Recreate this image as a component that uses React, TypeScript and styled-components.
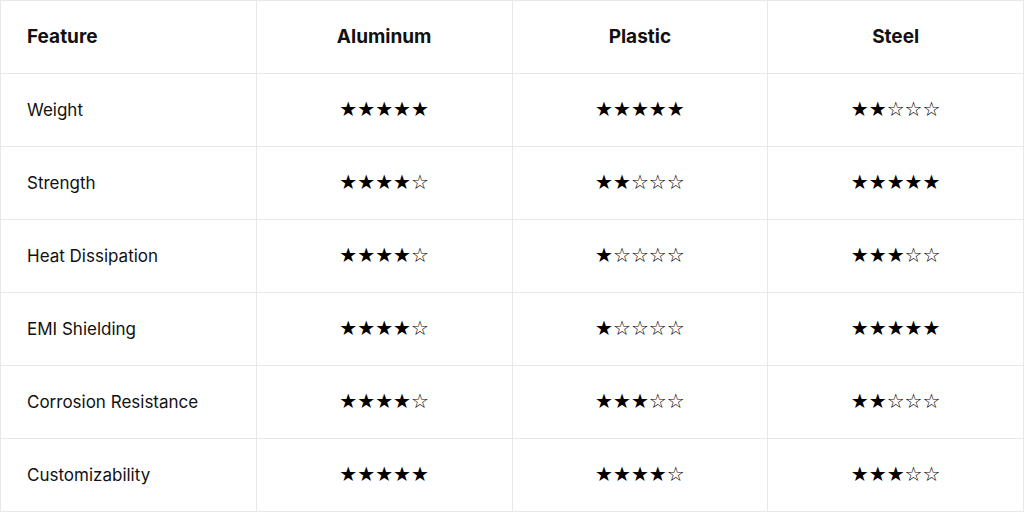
import styled, { createGlobalStyle } from "styled-components";

const GlobalStyle = createGlobalStyle`
  body {
    margin: 0;
    background: #ffffff;
    font-family: "Inter", "Open Sans", sans-serif;
    color: #111111;
  }
`;

const Table = styled.table`
  width: 1024px;
  border-collapse: collapse;
  table-layout: fixed;
`;

const Row = styled.tr`
  height: 73px;
`;

const HeadCell = styled.th<{ $first?: boolean }>`
  border: 1px solid #e8e8e8;
  font-size: 19px;
  font-weight: 700;
  text-align: ${(p) => (p.$first ? "left" : "center")};
  padding: 0 26px 2px;
`;

const FeatureCell = styled.td`
  border: 1px solid #e8e8e8;
  font-size: 17px;
  padding: 0 26px;
`;

const StarCell = styled.td`
  border: 1px solid #e8e8e8;
  text-align: center;
  font-family: "DejaVu Sans", sans-serif;
  font-size: 20px;
  color: #000000;
  padding-bottom: 4px;
`;

const materials = ["Aluminum", "Plastic", "Steel"];

const rows: [string, number[]][] = [
  ["Weight", [5, 5, 2]],
  ["Strength", [4, 2, 5]],
  ["Heat Dissipation", [4, 1, 3]],
  ["EMI Shielding", [4, 1, 5]],
  ["Corrosion Resistance", [4, 3, 2]],
  ["Customizability", [5, 4, 3]],
];

const stars = (n: number) => "★".repeat(n) + "☆".repeat(5 - n);

const App = () => {
  return (
    <>
      <GlobalStyle />
      <Table>
        <thead>
          <Row>
            <HeadCell $first>Feature</HeadCell>
            {materials.map((m) => (
              <HeadCell key={m}>{m}</HeadCell>
            ))}
          </Row>
        </thead>
        <tbody>
          {rows.map(([name, ratings]) => (
            <Row key={name}>
              <FeatureCell>{name}</FeatureCell>
              {ratings.map((r, i) => (
                <StarCell key={i}>{stars(r)}</StarCell>
              ))}
            </Row>
          ))}
        </tbody>
      </Table>
    </>
  );
};

export default App;
